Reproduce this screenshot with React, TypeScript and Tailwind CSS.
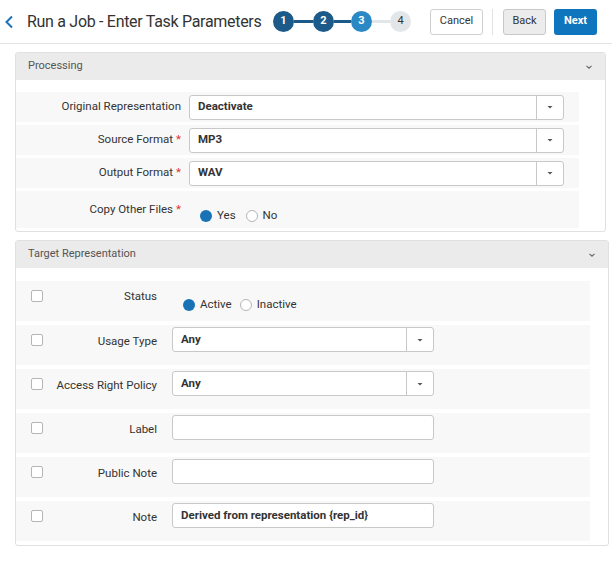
import React from "react";

const Caret = () => (
  <svg width="8" height="8" viewBox="0 0 8 8"><path d="M1.5 3 L4 5.5 L6.5 3 Z" fill="#555" /></svg>
);
const Chevron = () => (
  <svg width="8" height="8" viewBox="0 0 8 8"><path d="M1.5 2.8 L4 5.2 L6.5 2.8" fill="none" stroke="#666" strokeWidth="1.1" /></svg>
);

function Select({ value, w }: { value: string; w: string }) {
  return (
    <div className={`flex h-[25px] ${w} border border-[#c8c8c8] rounded-[3px] bg-white`}>
      <div className="flex-1 flex items-center pl-2 text-[11.5px] font-bold text-[#333]">{value}</div>
      <div className="w-[27px] border-l border-[#c8c8c8] flex items-center justify-center"><Caret /></div>
    </div>
  );
}

function Radio({ on, label }: { on: boolean; label: string }) {
  return (
    <span className="flex items-center gap-[5px] text-[11.5px] text-[#333]">
      <span className={`w-[12px] h-[12px] rounded-full ${on ? "bg-[#1773b5]" : "border border-[#b5b5b5] bg-white"}`} />
      {label}
    </span>
  );
}

const Req = () => <span className="text-[#e0301e] ml-[3px]">*</span>;

function PRow({ label, req, children, tall }: { label: string; req?: boolean; children: React.ReactNode; tall?: boolean }) {
  return (
    <div className={`flex bg-[#f8f8f8] mr-[26px] ${tall ? "h-[37px] items-start pt-[10px]" : "h-[30px] items-center"}`}>
      <div className="w-[165px] text-right text-[11.5px] text-[#333] shrink-0">{label}{req && <Req />}</div>
      <div className={`ml-[8px] flex-1 ${tall ? "pt-[6px]" : ""}`}>{children}</div>
    </div>
  );
}

function TRow({ label, children, radio }: { label: string; children: React.ReactNode; radio?: boolean }) {
  return (
    <div className={`flex bg-[#f8f8f8] mr-[18px] h-[40px] ${radio ? "items-start pt-[9px]" : "items-start pt-[2px]"}`}>
      <div className={`ml-[15px] w-[12px] h-[12px] border border-[#b5b5b5] rounded-[2px] bg-white shrink-0 ${radio ? "" : "mt-[7px]"}`} />
      <div className={`w-[114px] text-right text-[11.5px] text-[#333] shrink-0 ${radio ? "-mt-[2px]" : "mt-[6px]"}`}>{label}</div>
      <div className={`ml-[15px] ${radio ? "pt-[6px]" : ""}`}>{children}</div>
    </div>
  );
}

const Input = ({ value }: { value?: string }) => (
  <div className="w-[262px] h-[25px] border border-[#c8c8c8] rounded-[3px] bg-white flex items-center pl-2 text-[11.5px] font-bold text-[#333]">{value}</div>
);

export default function App() {
  return (
    <div className="w-[612px] h-[566px] bg-white" style={{ fontFamily: "Roboto, sans-serif" }}>
      <div className="h-[44px] border-b border-[#e3e3e3] flex items-center">
        <svg width="10" height="14" viewBox="0 0 10 14" className="ml-[4px] shrink-0"><path d="M8 1.5 L2.5 7 L8 12.5" fill="none" stroke="#1a73b8" strokeWidth="2" /></svg>
        <div className="ml-[13px] text-[16px] tracking-[-0.3px] text-[#333] whitespace-nowrap w-[246px] shrink-0">Run a Job - Enter Task Parameters</div>
        <div className="ml-[0px] flex items-center shrink-0">
          <span className="w-[21px] h-[21px] rounded-full bg-[#1c5a89] text-white text-[11px] font-bold flex items-center justify-center">1</span>
          <span className="w-[19px] h-[3px] bg-[#1c5a89]" />
          <span className="w-[21px] h-[21px] rounded-full bg-[#1c5a89] text-white text-[11px] font-bold flex items-center justify-center">2</span>
          <span className="w-[17px] h-[3px] bg-[#1c5a89]" />
          <span className="w-[21px] h-[21px] rounded-full bg-[#2a88c5] text-white text-[11px] font-bold flex items-center justify-center">3</span>
          <span className="w-[18px] h-[3px] bg-[#e3e6e9]" />
          <span className="w-[21px] h-[21px] rounded-full bg-[#e3e6e9] text-[#333] text-[11px] flex items-center justify-center">4</span>
        </div>
        <button className="ml-[19px] w-[53px] h-[26px] border border-[#d0d0d0] rounded-[3px] bg-white text-[11px] text-[#333] shrink-0">Cancel</button>
        <span className="ml-[9px] w-px h-[26px] bg-[#e3e3e3] shrink-0" />
        <button className="ml-[10px] w-[43px] h-[26px] border border-[#c8c8c8] rounded-[3px] bg-[#ececec] text-[11px] text-[#333] shrink-0">Back</button>
        <button className="ml-[8px] w-[43px] h-[26px] rounded-[3px] bg-[#0f75bc] text-[11px] font-bold text-white shrink-0">Next</button>
      </div>

      <div className="mx-[15px] mt-[8px] border border-[#e0e0e0] rounded-[3px] w-[591px]">
        <div className="h-[27px] bg-[#ebebeb] flex items-center justify-between px-[12px] text-[11px] text-[#555]">Processing<Chevron /></div>
        <div className="pt-[12px] pb-[3px] flex flex-col gap-[3px]">
          <PRow label="Original Representation"><Select value="Deactivate" w="w-[375px]" /></PRow>
          <PRow label="Source Format" req><Select value="MP3" w="w-[375px]" /></PRow>
          <PRow label="Output Format" req><Select value="WAV" w="w-[375px]" /></PRow>
          <PRow label="Copy Other Files" req tall>
            <div className="flex gap-[10px] ml-[11px]"><Radio on label="Yes" /><Radio on={false} label="No" /></div>
          </PRow>
        </div>
      </div>

      <div className="mx-[15px] mt-[8px] border border-[#e0e0e0] rounded-[3px] w-[594px]">
        <div className="h-[27px] bg-[#ebebeb] flex items-center justify-between px-[12px] text-[11px] text-[#555]">Target Representation<Chevron /></div>
        <div className="pt-[13px] pb-[4px] flex flex-col gap-[4px]">
          <TRow label="Status" radio>
            <div className="flex gap-[8px] ml-[11px]"><Radio on label="Active" /><Radio on={false} label="Inactive" /></div>
          </TRow>
          <TRow label="Usage Type"><Select value="Any" w="w-[262px]" /></TRow>
          <TRow label="Access Right Policy"><Select value="Any" w="w-[262px]" /></TRow>
          <TRow label="Label"><Input /></TRow>
          <TRow label="Public Note"><Input /></TRow>
          <TRow label="Note"><Input value="Derived from representation {rep_id}" /></TRow>
        </div>
      </div>
    </div>
  );
}
